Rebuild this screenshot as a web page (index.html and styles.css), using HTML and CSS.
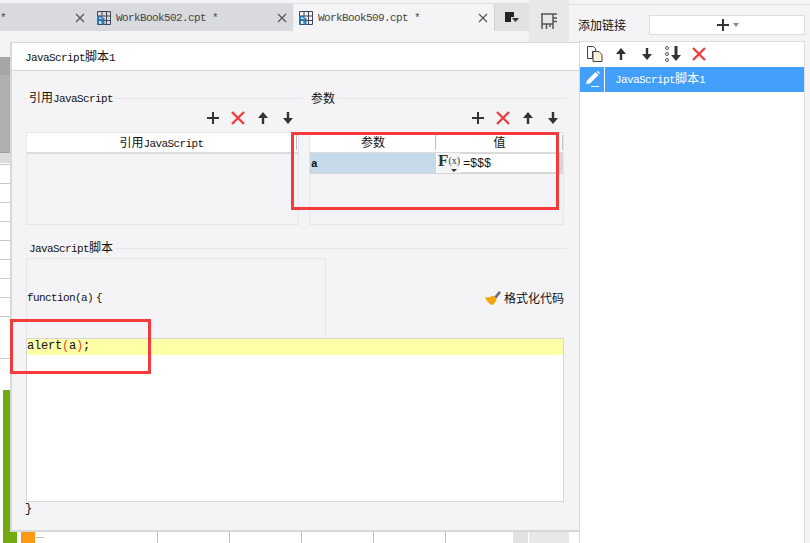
FILE: index.html
```html
<!DOCTYPE html>
<html lang="zh">
<head>
<meta charset="utf-8">
<title>JavaScript脚本</title>
<link rel="stylesheet" href="styles.css">
</head>
<body>
<svg class="defs" width="0" height="0" aria-hidden="true">
  <symbol id="i-plus" viewBox="0 0 16 16"><path d="M8 2v12M2 8h12" stroke="#333" stroke-width="2" fill="none"/></symbol>
  <symbol id="i-x" viewBox="0 0 16 16"><path d="M2 2l12 12M14 2L2 14" stroke="#ee3f3f" stroke-width="2.4" fill="none"/></symbol>
  <symbol id="i-up" viewBox="0 0 16 16"><path d="M8 2l5 6H9.200v6H6.800V8H3z" fill="#333"/></symbol>
  <symbol id="i-down" viewBox="0 0 16 16"><path d="M8 14l5-6H9.200V2H6.800v6H3z" fill="#333"/></symbol>
  <symbol id="i-book" viewBox="0 0 14 14"><path d="M.5.5h13v13H.5zM5 .5v13M9.500 .5v13M.5 5h13M.5 9.500h13" stroke="#445" fill="none"/><path d="M0 5h5v1.500H2v1.500h2v1.500H2V14H0zM5.500 7h2v7h-2z" fill="#1c78c4"/></symbol>
  <symbol id="i-close" viewBox="0 0 10 10"><path d="M1 1l8 8M9 1l-8 8" stroke="#555" stroke-width="1.200" fill="none"/></symbol>
</svg>
<div class="app">
  <main class="work">
    <div class="tabs">
      <div class="tab tab-first"><span class="m">*</span><svg class="close"><use href="#i-close"/></svg></div>
      <div class="tab tab-second">
        <svg class="book"><use href="#i-book"/></svg><span class="m tab-name">WorkBook502.cpt *</span><svg class="close"><use href="#i-close"/></svg>
      </div>
      <div class="tab tab-active">
        <svg class="book"><use href="#i-book"/></svg><span class="m tab-name">WorkBook509.cpt *</span><svg class="close"><use href="#i-close"/></svg>
      </div>
      <div class="tab-menu">
        <svg width="14" height="11" viewBox="0 0 14 11"><path d="M0 0h9v5H6v5H0z" fill="#222"/><path d="M7 6h7l-3.500 4z" fill="#333"/></svg>
      </div>
      <div class="tab-tool">
        <svg width="16" height="17" viewBox="0 0 16 17"><path d="M0 1h16M1 1v15M1 11h11M12 1v15M5.500 11v5M9 11v3M12 5h4M12 8.500h4" stroke="#555" stroke-width="1.500" fill="none"/></svg>
      </div>
    </div>
    <div class="gap-row"></div>
    <div class="ruler"></div>
    <div class="ruler-foot"></div>
    <div class="rows"></div>
    <div class="rows-lower"></div>
    <div class="foot">
      <div class="foot-spacer"></div>
      <div class="foot-cell"></div><div class="foot-cell"></div><div class="foot-cell"></div><div class="foot-cell"></div>
      <div class="foot-grey"></div>
      <div class="foot-grey foot-grey-wide"></div>
    </div>
    <div class="bar-green"></div>
    <div class="bar-orange"></div>
    <div class="foot-tick"></div>

    <section class="dialog">
      <header class="dlg-title"><span class="m">JavaScript</span>脚本<span class="m">1</span></header>
      <div class="dlg-body">
        <div class="cols">
          <div class="col">
            <div class="head"><span class="head-lead"></span><span class="legend">引用<span class="m">JavaScript</span></span><span class="head-line"></span></div>
            <div class="tools">
              <svg class="ico"><use href="#i-plus"/></svg><svg class="ico"><use href="#i-x"/></svg><svg class="ico"><use href="#i-up"/></svg><svg class="ico"><use href="#i-down"/></svg>
            </div>
            <div class="panel panel-left">
              <div class="thead"><div class="th th-one">引用<span class="m">JavaScript</span></div></div>
            </div>
          </div>
          <div class="col">
            <div class="head head-right"><span class="legend">参数</span><span class="head-line"></span></div>
            <div class="tools">
              <svg class="ico"><use href="#i-plus"/></svg><svg class="ico"><use href="#i-x"/></svg><svg class="ico"><use href="#i-up"/></svg><svg class="ico"><use href="#i-down"/></svg>
            </div>
            <div class="panel panel-right">
              <div class="thead"><div class="th th-name">参数</div><div class="th th-val">值</div></div>
              <div class="param-row">
                <div class="param-name">a</div>
                <div class="param-fx"><span class="fx-f">F</span><span class="fx-x">(x)</span><span class="fx-caret"></span></div>
                <div class="param-val">=$$$</div>
              </div>
            </div>
          </div>
        </div>
        <div class="head head-script"><span class="head-lead"></span><span class="legend"><span class="m">JavaScript</span>脚本</span><span class="head-line"></span></div>
        <div class="fn-row">
          <div class="fn-box"><span class="m">function(a)</span><span class="m brace">{</span></div>
          <div class="format">
            <svg width="17" height="16" viewBox="0 0 17 16"><path d="M10 7l5-6 2 1.500-4.500 6z" fill="#6d7079"/><path d="M1 7c3 1 6 0 8-1.500l3.500 3C12 12 10 15 7 15 5 13 2 11 1 7z" fill="#f3a712"/></svg>
            <span>格式化代码</span>
          </div>
        </div>
        <div class="editor">
          <div class="line-hi code">alert<span class="paren">(</span>a<span class="paren">)</span>;</div>
        </div>
        <div class="code code-end">}</div>
      </div>
    </section>
  </main>

  <aside class="side">
    <div class="side-top">
      <span class="side-label">添加链接</span>
      <div class="add-btn"><svg class="ico"><use href="#i-plus"/></svg><span class="add-caret"></span></div>
    </div>
    <div class="list">
      <div class="list-tools">
        <svg class="ico" viewBox="0 0 16 16"><path d="M.5.5h6l2 2v3H5.500v7h-5z" fill="#f7f7f7" stroke="#444"/><path d="M6 5.500h6l3 3v7H6z" fill="#fbf3d9" stroke="#444"/></svg>
        <svg class="ico"><use href="#i-up"/></svg>
        <svg class="ico"><use href="#i-down"/></svg>
        <svg class="ico" viewBox="0 0 16 16"><path d="M11 15l5-6h-3.500V0h-3v9H6z" fill="#333"/><circle cx="2" cy="2" r="1.500" fill="none" stroke="#555"/><circle cx="2" cy="8" r="1.500" fill="none" stroke="#555"/><circle cx="2" cy="14" r="1.500" fill="none" stroke="#555"/></svg>
        <svg class="ico"><use href="#i-x"/></svg>
      </div>
      <div class="list-item">
        <div class="item-icon">
          <svg width="18" height="16" viewBox="0 0 18 16"><path d="M2 13l1-3.500L11.500 1l3 3L6 12.500z M12.500 .5c.8-.6 1.800-.4 2.500.3s.9 1.700.3 2.500z" fill="#fff"/><path d="M7 15.500h8" stroke="#fff" stroke-width="1"/></svg>
        </div>
        <div class="item-text"><span class="m">JavaScript</span>脚本<span class="m">1</span></div>
      </div>
    </div>
  </aside>
</div>
<div class="mark mark-params"></div>
<div class="mark mark-code"></div>
</body>
</html>
```
FILE: styles.css
```css
* { box-sizing: border-box; }
html, body { margin: 0; padding: 0; }
body {
  position: relative;
  width: 810px;
  height: 543px;
  overflow: hidden;
  background: #f4f4f6;
  color: #111;
  font: 12px/14px "Noto Sans CJK SC", "Liberation Sans", sans-serif;
}
.defs { position: absolute; }
.m {
  font: 11px/14px "Liberation Mono", monospace;
  letter-spacing: -0.6px;
}
.code {
  font: 12px/14px "Liberation Mono", monospace;
  letter-spacing: -0.2px;
  color: #111;
}
.app { display: flex; height: 543px; }

/* workspace */
.work { position: relative; width: 579px; display: flex; flex-direction: column; }
.tabs {
  height: 42px;
  display: flex;
  align-items: flex-start;
  padding-top: 3px;
}
.tab {
  height: 28px;
  display: flex;
  align-items: center;
  background: #d9dadd;
  border-top: 1px solid #dedee0;
  color: #444;
}
.tab-first { width: 91px; padding: 0 6px 0 0; justify-content: space-between; }
.tab-second { width: 203px; padding: 0 6px 0 6px; border-right: 1px solid #f0f0f2; }
.tab-active { width: 201px; padding: 0 6px 0 5px; background: #f4f4f6; border-right: 1px solid #cfd0d2; }
.book { width: 14px; height: 14px; flex: none; }
.tab-name { margin-left: 5px; flex: 1; }
.close { width: 10px; height: 10px; flex: none; }
.tab-menu {
  width: 34px;
  height: 28px;
  background: #e0e1e3;
  border-top: 1px solid #dedee0;
  padding: 7px 0 0 10px;
}
.tab-tool {
  width: 40px;
  height: 42px;
  margin-top: -3px;
  background: #e8e8e8;
  padding: 13px 0 0 12px;
}
.gap-row { height: 15px; }
.ruler { height: 96px; background: linear-gradient(#a6a6a6 18px, #b0b0b0 18px); border-bottom: 1px solid #9c9c9c; }
.ruler-foot { height: 10px; background: #dcdcde; }
.rows {
  height: 170px;
  background: linear-gradient(#fff 18px, #c9c9c9 18px) 0 2px / 100% 19px;
}
.rows-lower {
  height: 199px;
  background: linear-gradient(#fff 25px, #c9c9c9 25px, #c9c9c9 26px, #fff 26px);
}
.foot { height: 11px; display: flex; background: #fff; }
.foot-spacer { width: 158px; border-right: 1px solid #c0c0c0; }
.foot-cell { width: 72px; border-right: 1px solid #c0c0c0; }
.foot-grey { width: 15px; background: #e2e2e2; margin-left: 67px; }
.foot-grey-wide { width: 40px; background: #e8e8e8; margin-left: 1px; }
.bar-green { position: absolute; left: 3px; top: 390px; width: 14px; height: 153px; background: #72aa10; }
.bar-orange { position: absolute; left: 21px; top: 532px; width: 14px; height: 11px; background: #fb9a12; }
.foot-tick { position: absolute; left: 36px; top: 537px; width: 8px; height: 1px; background: #c4c4c4; }

/* dialog */
.dialog {
  position: absolute;
  left: 10px;
  top: 42px;
  width: 570px;
  height: 490px;
  background: #f4f4f6;
  border: 1px solid #d8d8da;
  border-width: 1px 1px 2px 2px;
}
.dlg-title {
  height: 28px;
  padding: 6px 0 0 13px;
  background: #fff;
  border-bottom: 1px solid #d8d8da;
}
.dlg-body { padding: 20px 12px 0 11px; }
.cols { display: grid; grid-template-columns: 279px 265px; }
.head { display: flex; align-items: center; height: 14px; }
.head-lead { width: 4px; height: 1px; background: #e6e6e8; margin-right: 2px; }
.head-line { flex: 1; height: 1px; background: #e6e6e8; margin-left: 2px; }
.head-right { padding-left: 9px; }
.legend { white-space: nowrap; }
.tools {
  height: 27px;
  display: flex;
  justify-content: flex-end;
  align-items: flex-end;
  gap: 9px;
  padding: 0 6px 6px 0;
}
.ico { width: 16px; height: 16px; flex: none; }
.panel {
  height: 93px;
  border: 1px solid #e6e6e8;
  background: #f3f3f5;
}
.panel-left { margin: 0 3px; }
.panel-right { margin: 0 3px 0 7px; }
.thead {
  height: 21px;
  display: flex;
  background: #fff;
  border-bottom: 2px solid #dcdcdc;
}
.th {
  padding-top: 2px;
  text-align: center;
  position: relative;
}
.th-one { flex: 1; padding-right: 2px; }
.th-one::after, .th-val::after, .th-name::after {
  content: "";
  position: absolute;
  top: 2px;
  height: 15px;
  width: 1px;
  background: #bdbdb8;
}
.th-one::after { right: 1px; }
.th-val::after { right: 0; }
.th-name::after { right: 0; }
.th-name { width: 126px; }
.th-val { flex: 1; }
.param-row {
  height: 21px;
  display: flex;
  margin-top: -1px;
  padding-right: 4px;
  background: #d6d6d8;
}
.param-name {
  width: 126px;
  height: 20px;
  padding: 4px 0 0 1px;
  background: #c5d9e8;
  font: bold 11px/14px "Liberation Mono", monospace;
}
.param-fx {
  position: relative;
  width: 24px;
  height: 20px;
  border-left: 1px solid #fff;
  background: #f4f4f6;
  padding-left: 1px;
  color: #333;
  white-space: nowrap;
}
.fx-f { font: bold 17px/15px "Liberation Serif", serif; }
.fx-x { font: 10px/14px "Liberation Serif", serif; vertical-align: 2px; }
.fx-caret {
  position: absolute;
  left: 14px;
  bottom: 1px;
  border: 3px solid transparent;
  border-top: 3px solid #333;
  border-bottom: 0;
}
.param-val {
  width: 98px;
  height: 18px;
  margin-top: 1px;
  padding: 3px 0 0 3px;
  background: #fff;
  font: 12px/14px "Liberation Mono", monospace;
  letter-spacing: -0.2px;
}
.head-script { margin-top: 16px; }
.fn-row { display: flex; margin: 3px 0 0 3px; height: 80px; }
.fn-box {
  width: 300px;
  border: 1px solid #e6e6e8;
  border-bottom: 0;
  padding-top: 30px;
}
.brace { margin-left: 3px; }
.format {
  display: flex;
  align-items: center;
  gap: 3px;
  margin-left: 158px;
  height: 16px;
  margin-top: 32px;
}
.editor {
  margin-left: 3px;
  width: 538px;
  height: 164px;
  background: #fff;
  border: 1px solid #d6d6d8;
}
.line-hi { height: 16px; background: #ffffa8; }
.paren { color: #e8471c; }
.code-end { margin-left: 2px; margin-top: 0; }

/* right panel */
.side { width: 231px; display: flex; flex-direction: column; }
.side-top {
  height: 41px;
  display: flex;
  align-items: flex-start;
  margin-left: -10px;
  padding: 15px 5px 0 9px;
  position: relative;
  background: linear-gradient(#f4f4f6 4px, #dddde0 4px, #dddde0 5px, transparent 5px);
}
.side-label { width: 71px; padding-top: 3px; }
.add-btn {
  width: 156px;
  height: 20px;
  display: flex;
  align-items: center;
  justify-content: center;
  gap: 2px;
  background: #fff;
  border: 1px solid #dcdcde;
}
.add-caret { border: 3px solid transparent; border-top: 4px solid #888; border-bottom: 0; }
.list {
  flex: 1;
  width: 226px;
  background: #fff;
  border: 1px solid #dcdcde;
  border-bottom: 0;
}
.list-tools {
  height: 25px;
  display: flex;
  align-items: center;
  gap: 10px;
  padding: 0 0 2px 7px;
}
.list-item { height: 25px; display: flex; background: #42a0fa; color: #fff; }
.item-icon { width: 25px; padding: 4px 0 0 4px; border-right: 1px solid #fff; }
.item-text { padding: 4px 0 0 10px; }

/* annotations */
.mark { position: absolute; border: 3px solid #f43a3a; }
.mark-params { left: 291px; top: 132px; width: 268px; height: 78px; }
.mark-code { left: 10px; top: 319px; width: 141px; height: 55px; }
```
